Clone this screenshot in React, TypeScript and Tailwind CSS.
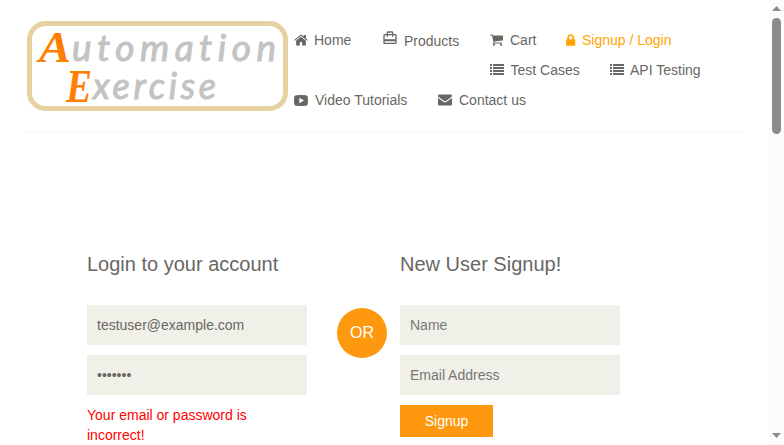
import type { ReactNode } from "react";
import { MdCardTravel } from "react-icons/md";

function HomeIcon() {
  return (
    <svg width="14" height="12" viewBox="0 0 14 12" fill="currentColor">
      <path d="M7 2.7L11.9 6.7V11Q11.9 11.5 11.4 11.5H8.1V8H5.9V11.5H2.6Q2.1 11.5 2.1 11V6.7Z" />
      <path d="M.2 5.9L6.2 .9Q7 .3 7.8 .9L9.7 2.5V1H11.9V4.3L13.8 5.9L13.1 6.8L7 1.8L.9 6.8Z" />
    </svg>
  );
}

function CartIcon() {
  return (
    <svg width="13" height="12" viewBox="0 0 13 12" fill="currentColor">
      <path d="M.5.5H2.4Q2.9.5 3 1L3.1 1.5H12.4Q13 1.5 13 2.1V6.1Q13 6.5 12.5 6.6L4.4 7.6L4.3 8.5H11.5Q12 8.5 12 9T11.5 9.5H3.5Q3 9.5 3 9L3.4 7.8L2 1.5H.5Q0 1.5 0 1T.5.5Z" />
      <circle cx="4.1" cy="10.7" r="1.1" />
      <circle cx="11" cy="10.7" r="1.1" />
    </svg>
  );
}

function LockIcon() {
  return (
    <svg width="10" height="12" viewBox="0 0 10 12" fill="currentColor">
      <path fillRule="evenodd" d="M1.3 5.2V3.7C1.3 1.4 2.8.2 4.7.2S8.1 1.4 8.1 3.7V5.2H8.5Q9.3 5.2 9.3 6V11Q9.3 11.8 8.5 11.8H.9Q.1 11.8.1 11V6Q.1 5.2.9 5.2ZM3 5.2H6.4V3.7C6.4 2.5 5.7 1.9 4.7 1.9S3 2.5 3 3.7Z" />
    </svg>
  );
}

function MailIcon() {
  return (
    <svg width="14" height="12" viewBox="0 0 14 12" fill="currentColor">
      <path d="M0 2V1.6Q0 .5 1.2.5H12.8Q14 .5 14 1.6Q14 2.7 12.7 3.6L8.2 6.7Q7 7.5 5.8 6.7L1.3 3.6Q0 2.7 0 2Z" />
      <path d="M0 4L5.4 7.7Q7 8.8 8.6 7.7L14 4V10.4Q14 11.5 12.8 11.5H1.2Q0 11.5 0 10.4Z" />
    </svg>
  );
}

function ListIcon() {
  return (
    <svg width="14" height="12" viewBox="0 0 14 12" fill="currentColor" shapeRendering="crispEdges">
      {[0, 3, 6, 9].map((y) => (
        <g key={y}>
          <rect x="0" y={y} width="2" height="2" />
          <rect x="3" y={y} width="11" height="2" />
        </g>
      ))}
    </svg>
  );
}

function VideoIcon() {
  return (
    <svg width="14" height="11" viewBox="0 0 14 11" fill="currentColor">
      <path fillRule="evenodd" d="M2.2.2Q7-.2 11.8.2Q13.5.3 13.8 2Q14.2 5.5 13.8 9Q13.5 10.6 11.8 10.8Q7 11.2 2.2 10.8Q.5 10.6.2 9Q-.2 5.5.2 2Q.5.3 2.2.2ZM5.3 2.7V8.3L10 5.5Z" />
    </svg>
  );
}

function NavItem({ icon, label, className, iconClass }: { icon: ReactNode; label: string; className: string; iconClass: string }) {
  return (
    <a className={`flex h-[30px] shrink-0 items-center whitespace-nowrap ${className}`}>
      <span className={`flex shrink-0 items-center ${iconClass}`}>{icon}</span>
      <span>{label}</span>
    </a>
  );
}

function Logo() {
  return (
    <svg width="264" height="92" viewBox="0 0 264 92" className="shrink-0">
      <rect x="5.5" y="3.5" width="256" height="85" rx="16" fill="#fff" stroke="#e6d1a0" strokeWidth="5" />
      <g className="italic [font-variant-ligatures:none]" fill="#c3c3c3">
        <text x="15" y="42" fontSize="45" fontWeight="700" fontFamily="Liberation Serif, serif" fill="#ff8000" textLength="32" lengthAdjust="spacingAndGlyphs">A</text>
        <text x="48" y="41" fontSize="37" fontFamily="Lato, sans-serif" stroke="#c3c3c3" strokeWidth="1" textLength="204" lengthAdjust="spacing">utomation</text>
        <text x="42" y="82" fontSize="46" fontWeight="700" fontFamily="Liberation Serif, serif" fill="#ff8000" textLength="26" lengthAdjust="spacingAndGlyphs">E</text>
        <text x="69" y="79" fontSize="36" fontFamily="Lato, sans-serif" stroke="#c3c3c3" strokeWidth="1" textLength="123" lengthAdjust="spacing">xercise</text>
      </g>
    </svg>
  );
}

const fieldClass = "block h-10 w-[220px] bg-[#f0f0e9] px-2.5 text-sm text-[#696763] outline-none placeholder:text-[#777]";

export default function App() {
  return (
    <div className="flex h-[445px] w-[784px] overflow-hidden bg-white font-['Liberation_Sans',Arial,sans-serif] text-sm text-[#696763]">
      <div className="w-[769px] shrink-0">
        <header className="ml-6 flex h-[133px] w-[720px] border-b border-[#f5f5f5] pt-5">
          <Logo />
          <nav className="ml-1.5 mt-[5px]">
            <div className="flex">
              <NavItem icon={<HomeIcon />} label="Home" className="w-[89px]" iconClass="w-5" />
              <NavItem icon={<MdCardTravel size={16} className="-mt-[5px] shrink-0" />} label="Products" className="w-[107px] pt-px" iconClass="-ml-px w-[22px]" />
              <NavItem icon={<CartIcon />} label="Cart" className="w-[76px]" iconClass="w-5" />
              <NavItem icon={<LockIcon />} label="Signup / Login" className="text-[orange]" iconClass="w-4" />
            </div>
            <div className="ml-[196px] flex">
              <NavItem icon={<ListIcon />} label="Test Cases" className="w-[120px]" iconClass="w-[20.5px]" />
              <NavItem icon={<ListIcon />} label="API Testing" className="" iconClass="w-5" />
            </div>
            <div className="flex">
              <NavItem icon={<VideoIcon />} label="Video Tutorials" className="w-[144px]" iconClass="w-[21px]" />
              <NavItem icon={<MailIcon />} label="Contact us" className="" iconClass="w-[21px]" />
            </div>
          </nav>
        </header>
        <main className="ml-[87px] mt-[120px] flex">
          <form className="w-[220px]">
            <h2 className="h-[52px] text-xl leading-[22px]">Login to your account</h2>
            <div className="flex flex-col gap-2.5">
              <input className={fieldClass} type="email" defaultValue="testuser@example.com" />
              <input className={fieldClass} type="password" defaultValue="example" />
              <p className="w-[180px] leading-5 text-[#ff0000]">Your email or password is incorrect!</p>
            </div>
          </form>
          <div className="ml-[30px] mt-[55px] flex h-[50px] w-[50px] items-center justify-center rounded-full bg-[#fe980f] text-base text-white">OR</div>
          <form className="ml-[13px] w-[220px]">
            <h2 className="h-[52px] text-xl leading-[22px]">New User Signup!</h2>
            <div className="flex flex-col gap-2.5">
              <input className={fieldClass} type="text" placeholder="Name" />
              <input className={fieldClass} type="email" placeholder="Email Address" />
              <button type="button" className="h-8 w-[93px] bg-[#fe980f] text-white">Signup</button>
            </div>
          </form>
        </main>
      </div>
      <div className="flex w-[15px] shrink-0 flex-col items-center bg-[#fcfcfc] pt-1.5">
        <svg width="9" height="5" viewBox="0 0 9 5" fill="#8b8b8b"><path d="M0 5L4.5 0L9 5Z" /></svg>
        <div className="mt-[7px] h-[116px] w-[9px] rounded-full bg-[#8b8b8b]" />
        <svg className="mt-auto mb-[7px]" width="9" height="5" viewBox="0 0 9 5" fill="#8b8b8b"><path d="M0 0H9L4.5 5Z" /></svg>
      </div>
    </div>
  );
}
